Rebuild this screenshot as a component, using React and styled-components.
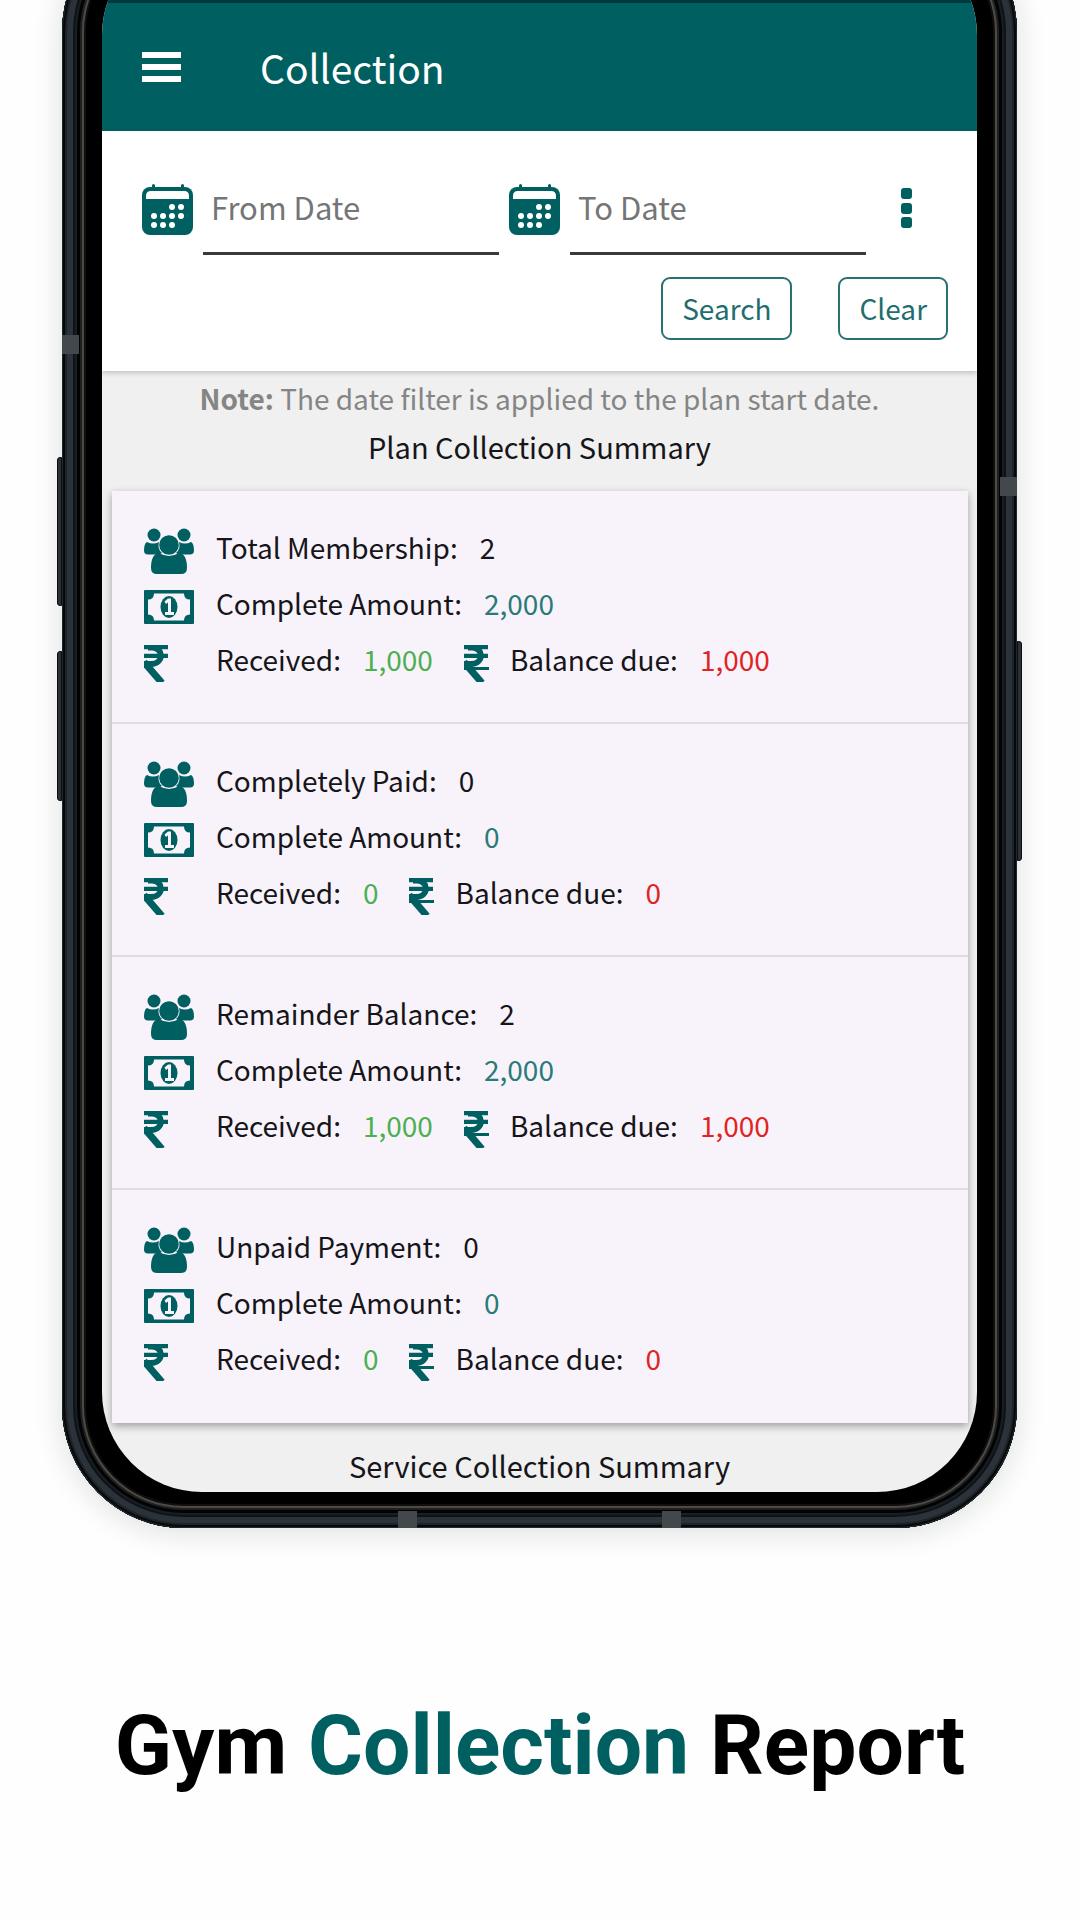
import styled, { createGlobalStyle } from "styled-components";

const TEAL = "#005f61";

const GlobalStyle = createGlobalStyle`
  * {
    box-sizing: border-box;
  }

  body {
    margin: 0;
    background: #fefefe;
    font-family: "Noto Sans CJK SC", "Noto Sans", sans-serif;
    color: #161519;
  }

  button,
  input {
    font: inherit;
  }
`;

const Page = styled.main`
  display: flex;
  flex-direction: column;
  gap: 169px;
  overflow: hidden;
`;

const Phone = styled.div`
  position: relative;
  margin: -90px 63px 0 62px;
  padding: 0 40px 36px;
  border-radius: 122px;
  background: #000;
  box-shadow:
    inset 0 0 0 1px #23282c,
    inset 0 0 0 3px #06090b,
    inset 0 0 0 5px #1d2329,
    inset 0 0 0 11px #2b3239,
    inset 0 0 0 13px #0e1317,
    inset 0 0 0 15px #181e24,
    inset 0 0 0 18px #020304,
    inset 0 0 0 20px #20211f,
    inset 0 0 0 22px #4b4a47,
    inset 0 0 0 24px #100f0e,
    0 4px 30px rgba(0, 20, 20, 0.14);
`;

const SideKey = styled.span`
  position: absolute;
  top: ${({ $top }) => $top}px;
  ${({ $side }) => $side}: -5px;
  width: 5px;
  height: ${({ $height }) => $height}px;
  border: 1px solid #0a0d0f;
  border-radius: ${({ $side }) => ($side === "left" ? "3px 0 0 3px" : "0 3px 3px 0")};
  background: #2b3136;
`;

const Antenna = styled.span`
  position: absolute;
  top: ${({ $top }) => $top}px;
  ${({ $side }) => $side}: 0;
  width: 17px;
  height: 19px;
  background: #43484d;
`;

const BottomAntenna = styled.span`
  position: absolute;
  bottom: 0;
  left: ${({ $left }) => $left};
  width: 19px;
  height: 17px;
  background: #43484d;
`;

const Screen = styled.div`
  margin-top: 25px;
  overflow: hidden;
  border-radius: 100px;
  background: #f0f0f0;
`;

const StatusBar = styled.div`
  height: 68px;
  background: #003a3d;
`;

const AppBar = styled.header`
  display: flex;
  align-items: center;
  gap: 79px;
  height: 128px;
  padding: 0 40px;
  background: ${TEAL};
  color: #fff;
`;

const IconButton = styled.button`
  display: flex;
  padding: 0;
  border: 0;
  background: none;
  color: inherit;
  cursor: pointer;
`;

const AppTitle = styled.h1`
  margin: 0;
  font-size: 39px;
  font-weight: 400;
  line-height: 48px;
`;

const Filters = styled.form`
  padding: 40px 29px 31px 40px;
  background: #fff;
  box-shadow: 0 2px 5px rgba(0, 0, 0, 0.2);
`;

const DateRow = styled.div`
  display: flex;
  align-items: flex-start;
  gap: 10px;
  color: ${TEAL};
`;

const DateField = styled.label`
  display: flex;
  flex: 1;
  gap: 10px;
  min-width: 0;

  svg {
    flex: none;
    margin-top: 13px;
  }
`;

const DateInput = styled.input`
  flex: 1;
  min-width: 0;
  height: 84px;
  padding: 0 8px 10px;
  border: 0;
  border-bottom: 3px solid #3a3a3a;
  outline: 0;
  background: none;
  font-size: 31px;
  line-height: 40px;

  &::placeholder {
    color: #757575;
    opacity: 1;
  }
`;

const MoreButton = styled(IconButton)`
  width: 72px;
  margin-top: 17px;
  padding-left: 25px;
  color: ${TEAL};
`;

const Actions = styled.div`
  display: flex;
  justify-content: flex-end;
  gap: 46px;
  margin-top: 22px;
`;

const OutlineButton = styled.button`
  height: 63px;
  padding: 0 19px 2px;
  border: 2px solid #2a7271;
  border-radius: 9px;
  background: none;
  color: #1f6e6d;
  font-size: 28px;
  line-height: 40px;
  cursor: pointer;
`;

const Note = styled.p`
  margin: 0;
  padding-top: 7px;
  color: #858585;
  font-size: 28px;
  line-height: 40px;
  text-align: center;
`;

const SectionTitle = styled.h2`
  margin: 0;
  font-size: 29px;
  font-weight: 400;
  line-height: 40px;
  text-align: center;
`;

const PlanTitle = styled(SectionTitle)`
  padding: 8px 0 25px;
`;

const ServiceTitle = styled(SectionTitle)`
  padding: 22px 0 7px;
`;

const Card = styled.section`
  margin: 0 9px 0 10px;
  background: #f8f3fa;
  box-shadow: 0 3px 8px rgba(0, 0, 0, 0.35);
`;

const Group = styled.div`
  height: 233px;
  padding: 28px 32px 0;
  border-bottom: 2px solid #dfdbe1;

  &:last-child {
    border-bottom: 0;
  }
`;

const Line = styled.div`
  display: flex;
  align-items: center;
  height: 56px;
  font-size: 28px;
  line-height: 40px;
  white-space: pre;
`;

const IconSlot = styled.span`
  display: flex;
  flex: none;
  width: 72px;
  padding-top: 8px;
  color: ${TEAL};
`;

const DueIcon = styled.span`
  display: flex;
  margin: 0 21px 0 31px;
  padding-top: 8px;
  color: ${TEAL};
`;

const Value = styled.span`
  margin-left: 22px;
  color: ${({ $color }) => $color || "inherit"};
`;

const Caption = styled.h2`
  margin: 0;
  font-family: Roboto, sans-serif;
  font-size: 84px;
  font-weight: 700;
  line-height: 98px;
  color: #000;
  text-align: center;

  span {
    color: ${TEAL};
  }
`;

const MenuIcon = () => (
  <svg width="39" height="30" fill="currentColor" aria-hidden="true">
    <path d="M0 0h39v6H0zM0 12h39v6H0zM0 24h39v6H0z" />
  </svg>
);

const CALENDAR_DOTS = [
  [30, 23], [39, 23],
  [12, 32], [21, 32], [30, 32], [39, 32],
  [12, 41], [21, 41], [30, 41],
];

const CalendarIcon = () => (
  <svg width="51" height="51" viewBox="0 0 51 51" fill="none" aria-hidden="true">
    <rect y="3" width="51" height="48" rx="8" fill="currentColor" />
    <path d="M11.500 1.500v5M40.500 1.500v5" stroke="currentColor" strokeWidth="3" strokeLinecap="round" />
    <path d="M4 15v-3q0-5 5-5h33q5 0 5 5v3z" fill="#fff" />
    {CALENDAR_DOTS.map(([x, y]) => (
      <circle key={`${x}-${y}`} cx={x} cy={y} r="3" fill="#fff" />
    ))}
  </svg>
);

const MoreIcon = () => (
  <svg width="11" height="41" fill="currentColor" aria-hidden="true">
    <rect width="11" height="11" rx="3" />
    <rect y="15" width="11" height="11" rx="3" />
    <rect y="29" width="11" height="11" rx="3" />
  </svg>
);

const GroupIcon = () => (
  <svg width="50" height="47" viewBox="0 0 50 47" fill="currentColor" aria-hidden="true">
    <circle cx="10" cy="7" r="6.500" />
    <circle cx="40" cy="7" r="6.500" />
    <path d="M3 14q6 3 12 0-2 7 3 11l-3 1.500H4q-4 0-4-4 0-7 3-8.500zM47 14q-6 3-12 0 2 7-3 11l3 1.500h11q4 0 4-4 0-7-3-8.500z" />
    <circle cx="25" cy="17" r="9.800" />
    <path d="M15 25q10 6 20 0 8 1 8 15 0 6-6 6H13q-6 0-6-6 0-14 8-15z" />
  </svg>
);

const MoneyIcon = () => (
  <svg width="50" height="34" viewBox="0 0 50 34" aria-hidden="true">
    <rect width="50" height="34" rx="1" fill="currentColor" />
    <path d="M10 3.500h30q0 6 6 6v15q-6 0-6 6H10q0-6-6-6v-15q6 0 6-6z" fill="#f8f3fa" />
    <ellipse cx="25" cy="17" rx="8.500" ry="11" fill="currentColor" />
    <path d="M20.500 11.500l3.500-3h3v13.500h3v3h-9v-3h3v-9.500l-2 1.500z" fill="#f8f3fa" />
  </svg>
);

const RupeeIcon = ({ struck }) => (
  <svg width="25" height="37" viewBox="0 0 25 37" fill="none" stroke="currentColor" aria-hidden="true">
    <path d="M0 2.200h24M0 10.800h24" strokeWidth="4.200" />
    <path d="M4 2.500h4c12 0 12 16.500-1 16.500H0" strokeWidth="6" />
    <path d="M0 17L18 38" strokeWidth="7" />
    {struck && <path d="M0 23.500h25" strokeWidth="3" />}
  </svg>
);

const GROUPS = [
  { label: "Total Membership:", count: "2", amount: "2,000", received: "1,000", due: "1,000" },
  { label: "Completely Paid:", count: "0", amount: "0", received: "0", due: "0" },
  { label: "Remainder Balance:", count: "2", amount: "2,000", received: "1,000", due: "1,000" },
  { label: "Unpaid Payment:", count: "0", amount: "0", received: "0", due: "0" },
];

const SummaryGroup = ({ label, count, amount, received, due }) => (
  <Group>
    <Line>
      <IconSlot><GroupIcon /></IconSlot>
      {label}
      <Value>{count}</Value>
    </Line>
    <Line>
      <IconSlot><MoneyIcon /></IconSlot>
      Complete Amount:
      <Value $color="#2a7a78">{amount}</Value>
    </Line>
    <Line>
      <IconSlot><RupeeIcon /></IconSlot>
      Received:
      <Value $color="#4caf50">{received}</Value>
      <DueIcon><RupeeIcon struck /></DueIcon>
      Balance due:
      <Value $color="#e02424">{due}</Value>
    </Line>
  </Group>
);

const App = () => {
  return (
    <Page>
      <GlobalStyle />
      <Phone>
        <SideKey $side="left" $top={547} $height={149} />
        <SideKey $side="left" $top={741} $height={150} />
        <SideKey $side="right" $top={731} $height={220} />
        <Antenna $side="left" $top={425} />
        <Antenna $side="right" $top={567} />
        <BottomAntenna $left="35.2%" />
        <BottomAntenna $left="62.8%" />

        <Screen>
          <StatusBar />
          <AppBar>
            <IconButton type="button" aria-label="Menu"><MenuIcon /></IconButton>
            <AppTitle>Collection</AppTitle>
          </AppBar>

          <Filters onSubmit={(e) => e.preventDefault()}>
            <DateRow>
              <DateField>
                <CalendarIcon />
                <DateInput type="text" aria-label="From Date" placeholder="From Date" />
              </DateField>
              <DateField>
                <CalendarIcon />
                <DateInput type="text" aria-label="To Date" placeholder="To Date" />
              </DateField>
              <MoreButton type="button" aria-label="More options"><MoreIcon /></MoreButton>
            </DateRow>
            <Actions>
              <OutlineButton type="submit">Search</OutlineButton>
              <OutlineButton type="reset">Clear</OutlineButton>
            </Actions>
          </Filters>

          <Note><b>Note:</b> The date filter is applied to the plan start date.</Note>
          <PlanTitle>Plan Collection Summary</PlanTitle>
          <Card>
            {GROUPS.map((group) => (
              <SummaryGroup key={group.label} {...group} />
            ))}
          </Card>
          <ServiceTitle>Service Collection Summary</ServiceTitle>
        </Screen>
      </Phone>

      <Caption>
        Gym <span>Collection</span> Report
      </Caption>
    </Page>
  );
};

export default App;
